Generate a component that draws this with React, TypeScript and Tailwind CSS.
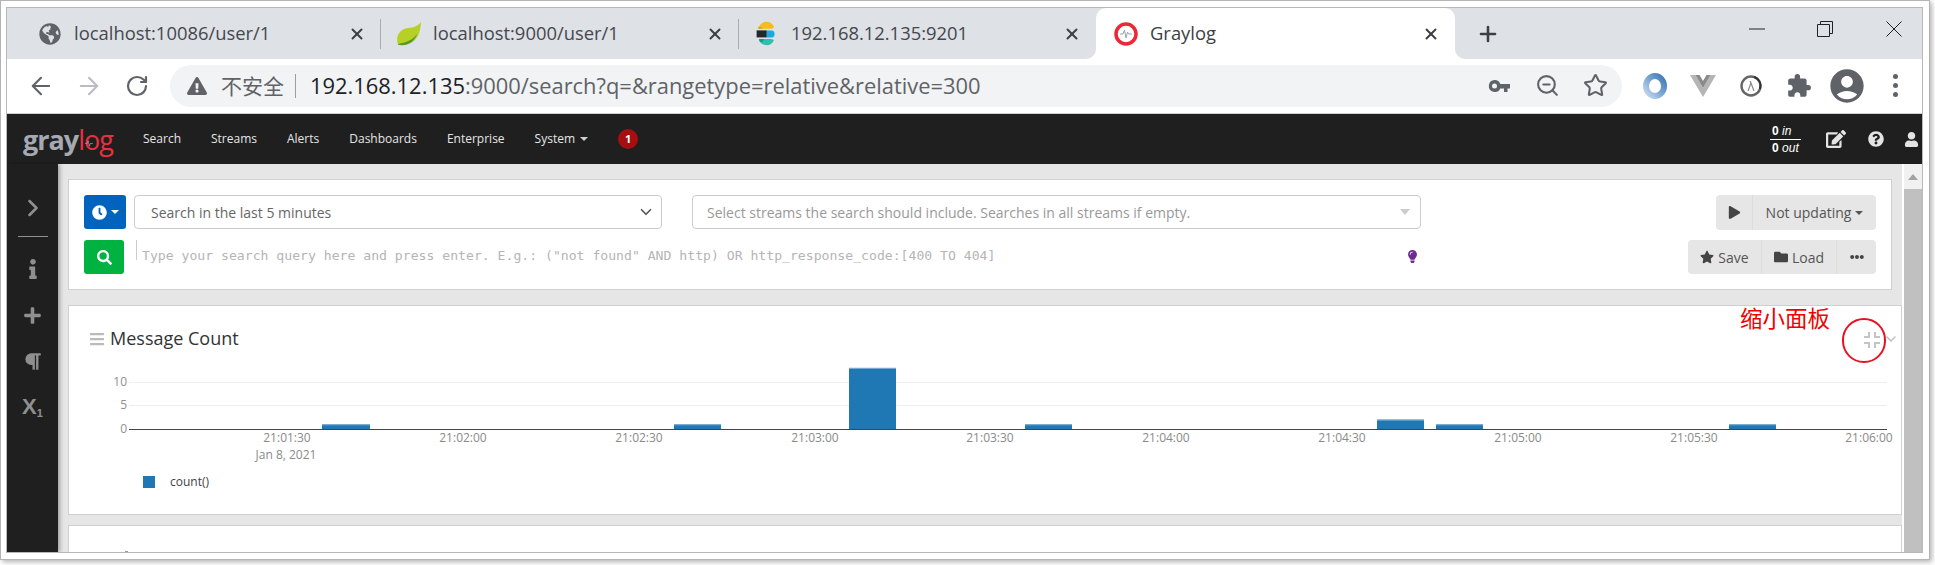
import { ArrowLeft, ArrowRight, RotateCw, ZoomOut, Star, X, Plus, ChevronDown, ChevronRight } from 'lucide-react'
import {
    FaBars, FaClock, FaEdit, FaEllipsisH, FaExclamationTriangle, FaFolder, FaGlobeAmericas, FaInfo, FaLightbulb,
    FaParagraph, FaPlay, FaPlus, FaQuestionCircle, FaSearch, FaStar, FaUser,
} from 'react-icons/fa'
import { MdAccountCircle, MdExtension } from 'react-icons/md'
import type { ReactNode } from 'react'

const NAV_ITEMS = ['Search', 'Streams', 'Alerts', 'Dashboards', 'Enterprise']

const BARS = [
    { x: 322, w: 48, n: 1 },
    { x: 674, w: 47, n: 1 },
    { x: 849, w: 47, n: 13 },
    { x: 1025, w: 47, n: 1 },
    { x: 1377, w: 47, n: 2 },
    { x: 1436, w: 47, n: 1 },
    { x: 1729, w: 47, n: 1 },
]

const TICKS = [
    { x: 287, t: '21:01:30' },
    { x: 463, t: '21:02:00' },
    { x: 639, t: '21:02:30' },
    { x: 815, t: '21:03:00' },
    { x: 990, t: '21:03:30' },
    { x: 1166, t: '21:04:00' },
    { x: 1342, t: '21:04:30' },
    { x: 1518, t: '21:05:00' },
    { x: 1694, t: '21:05:30' },
    { x: 1869, t: '21:06:00' },
]

function LeafIcon() {
    return (
        <svg width="26" height="24" viewBox="0 0 26 24">
            <path d="M25 0C24.500 6 24 16 15 21C10 23.500 5 23.500 2 22.500C-1 14 4 7 12 6C18 5.500 22 4 25 0Z" fill="#b7d025" />
            <path d="M2 22C8 21 16 19 21 12C19 19 11 25 2 22.800Z" fill="#4f9a2a" />
        </svg>
    )
}

function ElasticIcon() {
    return (
        <svg width="22" height="25" viewBox="0 0 24 32">
            <path d="M3 9C4 3 9 1 13 1C17 1 20 3 22 7C22 9 20 10 18 10H3Z" fill="#f4bd19" />
            <path d="M3 7C2 8 2 9 2 10H8C8 9 5 7 3 7Z" fill="#d8a22a" />
            <rect x="0" y="12" width="13" height="9" fill="#23282b" />
            <path d="M13 12H19C22 12 23 14 23 16.500C23 19 22 21 19 21H13Z" fill="#1ba9e1" />
            <path d="M3 23H18C20 23 22 24 22 25C20 29 17 31 13 31C9 31 4 29 3 23Z" fill="#2dbfae" />
            <path d="M3 23H9C9 26 7 27 5 27C4 26 3 25 3 23Z" fill="#159a8c" />
        </svg>
    )
}

function GraylogIcon() {
    return (
        <svg width="24" height="24" viewBox="0 0 24 24">
            <circle cx="12" cy="12" r="10" fill="#fff" stroke="#ee2737" strokeWidth="3.500" />
            <path d="M6 12H9L10.500 8L12 16L13.500 10L14.500 12H18" fill="none" stroke="#9aa3ad" strokeWidth="1" />
        </svg>
    )
}

function RingIcon() {
    return (
        <svg width="26" height="26" viewBox="0 0 26 26">
            <defs>
                <linearGradient id="ring" x1="0" y1="1" x2="1" y2="0">
                    <stop offset="0" stopColor="#c6d9ee" />
                    <stop offset="0.5" stopColor="#7ba7d4" />
                    <stop offset="1" stopColor="#3f77b5" />
                </linearGradient>
            </defs>
            <ellipse cx="13" cy="13" rx="9" ry="10" fill="none" stroke="url(#ring)" strokeWidth="6" />
            <ellipse cx="12" cy="13" rx="4" ry="6" fill="#fff" transform="rotate(15 12 13)" />
        </svg>
    )
}

function VueIcon() {
    return (
        <svg width="26" height="22" viewBox="0 0 26 22">
            <path d="M0 0H5.500L13 13L20.500 0H26L13 22Z" fill="#b5b5b5" />
            <path d="M5.500 0H9.500L13 6L16.500 0H20.500L13 13Z" fill="#8a8a8a" />
        </svg>
    )
}

function LambdaIcon() {
    return (
        <svg width="24" height="24" viewBox="0 0 24 24">
            <circle cx="12" cy="12" r="9.500" fill="#fff" stroke="#666" strokeWidth="2.400" />
            <path d="M15 3C20 4.500 22.500 9 21 15" fill="none" stroke="#333" strokeWidth="2" />
            <path d="M9 17L12 9L15 17M11 7L12 9" fill="none" stroke="#888" strokeWidth="1.200" />
        </svg>
    )
}

function KeyIcon() {
    return (
        <svg width="22" height="14" viewBox="0 0 22 14">
            <path d="M6.500 1A6 6 0 0 1 12.300 5H22V9.500H19.500V13H16V9.500H12.300A6 6 0 1 1 6.500 1ZM6.500 4.500A2.500 2.500 0 1 0 6.500 9.500A2.500 2.500 0 1 0 6.500 4.500Z" fill="#5f6368" fillRule="evenodd" />
        </svg>
    )
}

function CompressIcon() {
    return (
        <svg width="16" height="16" viewBox="0 0 16 16" fill="none" stroke="#c4c4c4" strokeWidth="2">
            <path d="M5 0V5H0M11 0V5H16M5 16V11H0M11 16V11H16" />
        </svg>
    )
}

function Tab(props: { width: string, icon: ReactNode, text: string, padding: string, gap: string, line?: boolean }) {
    return (
        <div className={`${props.width} ${props.padding} relative flex h-full items-center`}>
            <span className={`${props.gap} flex shrink-0 items-center justify-center`}>{props.icon}</span>
            <span className="text-[18.4px] leading-none text-[#45484d]">{props.text}</span>
            <X size={18} strokeWidth={2.6} className="ml-auto mr-[15px] text-[#3c4043]" />
            {props.line && <span className="absolute right-0 top-[11px] h-[30px] w-px bg-[#a9acb0]" />}
        </div>
    )
}

function ToolIcon(props: { children: ReactNode }) {
    return <div className="flex h-full w-[48px] shrink-0 items-center justify-center">{props.children}</div>
}

function ButtonCell(props: { width: string, children: ReactNode, line?: boolean }) {
    return (
        <div className={`${props.width} ${props.line ? 'border-r border-[#dcdcdc]' : ''} flex h-full items-center justify-center gap-[4px] text-[14px] text-[#555]`}>
            {props.children}
        </div>
    )
}

export default function App() {
    return (
        <div className="h-[565px] w-[1935px] overflow-hidden bg-white font-['Open_Sans',sans-serif]">
            <div className="h-[560px] w-[1930px] border border-[#b4b4b4] pl-[5px] pt-[6px] shadow-[2px_2px_5px_rgba(0,0,0,0.3)]">
                <div className="flex h-[546px] w-[1917px] flex-col overflow-hidden border border-[#b8b8b8]">

                    {/* tabs */}
                    <div className="flex h-[51px] shrink-0 items-center bg-[#dee1e6]">
                        <Tab width="w-[374px]" padding="pl-[32px]" gap="mr-[13px] w-[22px]" line icon={<FaGlobeAmericas size={22} className="text-[#5f6368]" />} text="localhost:10086/user/1" />
                        <Tab width="w-[358px]" padding="pl-[15px]" gap="mr-[11px] w-[26px]" line icon={<LeafIcon />} text="localhost:9000/user/1" />
                        <Tab width="w-[357px]" padding="pl-[15px]" gap="mr-[13px] w-[24px]" icon={<ElasticIcon />} text="192.168.12.135:9201" />
                        <div className="relative flex h-full w-[359px] items-center rounded-t-[10px] bg-white pl-[18px]">
                            <span className="absolute bottom-0 left-[-10px] h-[10px] w-[10px] bg-white"><span className="block h-full w-full rounded-br-[10px] bg-[#dee1e6]" /></span>
                            <span className="absolute bottom-0 right-[-10px] h-[10px] w-[10px] bg-white"><span className="block h-full w-full rounded-bl-[10px] bg-[#dee1e6]" /></span>
                            <span className="mr-[12px]"><GraylogIcon /></span>
                            <span className="text-[18.4px] leading-none text-[#3c4043]">Graylog</span>
                            <X size={18} strokeWidth={2.6} className="ml-auto mr-[15px] text-[#3c4043]" />
                        </div>
                        <Plus size={24} strokeWidth={2.6} className="ml-[21px] text-[#3c4043]" />
                        <svg width="16" height="2" viewBox="0 0 16 2" className="mb-[10px] ml-[249px]"><path d="M0 1H16" stroke="#222" /></svg>
                        <svg width="16" height="16" viewBox="0 0 16 16" className="mb-[10px] ml-[52px]" fill="none" stroke="#222">
                            <path d="M0.500 3.500H12.500V15.500H0.500ZM3.500 3.500V0.500H15.500V12.500H12.500" />
                        </svg>
                        <svg width="16" height="16" viewBox="0 0 16 16" className="mb-[10px] ml-[53px]" fill="none" stroke="#222"><path d="M0.500 0.500L15.500 15.500M15.500 0.500L0.500 15.500" /></svg>
                    </div>

                    {/* toolbar */}
                    <div className="flex h-[55px] shrink-0 items-center border-b border-[#cfcfcf] bg-white pb-[1px] pl-[10px]">
                        <ToolIcon><ArrowLeft size={28} strokeWidth={1.8} className="text-[#5f6368]" /></ToolIcon>
                        <ToolIcon><ArrowRight size={28} strokeWidth={1.8} className="text-[#b9bcc0]" /></ToolIcon>
                        <ToolIcon><RotateCw size={24} strokeWidth={2.2} className="text-[#5f6368]" /></ToolIcon>
                        <div className="ml-[9px] flex h-[42px] w-[1452px] items-center rounded-full bg-[#f1f3f4] pl-[17px] pr-[3px]">
                            <FaExclamationTriangle size={20} className="shrink-0 text-[#5f6368]" />
                            <span className="ml-[14px] font-['Noto_Sans_CJK_SC',sans-serif] text-[21px] leading-none text-[#5f6368]">不安全</span>
                            <span className="ml-[11px] h-[24px] w-px bg-[#9a9da1]" />
                            <span className="ml-[14px] text-[21.9px] leading-none text-[#5f6368]"><span className="text-[#202124]">192.168.12.135</span>:9000/search?q=&amp;rangetype=relative&amp;relative=300</span>
                            <div className="ml-auto flex h-full">
                                <ToolIcon><KeyIcon /></ToolIcon>
                                <ToolIcon><ZoomOut size={25} strokeWidth={2} className="text-[#5f6368]" /></ToolIcon>
                                <ToolIcon><Star size={25} strokeWidth={2} className="text-[#5f6368]" /></ToolIcon>
                            </div>
                        </div>
                        <div className="ml-[9px] flex h-full">
                            <ToolIcon><RingIcon /></ToolIcon>
                            <ToolIcon><VueIcon /></ToolIcon>
                            <ToolIcon><LambdaIcon /></ToolIcon>
                            <ToolIcon><MdExtension size={26} className="text-[#5f6368]" /></ToolIcon>
                            <ToolIcon><MdAccountCircle size={40} className="text-[#5f6368]" /></ToolIcon>
                            <ToolIcon>
                                <div className="flex flex-col gap-[4px]">
                                    <span className="h-[5px] w-[5px] rounded-full bg-[#5f6368]" />
                                    <span className="h-[5px] w-[5px] rounded-full bg-[#5f6368]" />
                                    <span className="h-[5px] w-[5px] rounded-full bg-[#5f6368]" />
                                </div>
                            </ToolIcon>
                        </div>
                    </div>

                    {/* graylog navbar */}
                    <div className="flex h-[50px] shrink-0 items-center bg-[#1f1f1f] pl-[16px]">
                        <div className="relative w-[90px] whitespace-nowrap text-[27px] font-bold leading-none tracking-[-1px] text-[#a5a9b2]">
                            gray<span className="font-normal text-[#e8303f]">log</span>
                            <svg width="8" height="7" viewBox="0 0 9 8" className="absolute left-[62px] top-[14px]">
                                <path d="M0 4H2.500L3.500 1L5 7L6 4H9" fill="none" stroke="#9aa3ad" strokeWidth="0.800" />
                            </svg>
                        </div>
                        <div className="ml-[30px] flex items-center gap-[30px] text-[12px] text-[#e6e6e6]">
                            {NAV_ITEMS.map((item) => <span key={item}>{item}</span>)}
                            <span className="flex items-center">
                                System
                                <span className="ml-[5px] border-x-[4px] border-t-[4px] border-x-transparent border-t-[#d0d0d0]" />
                            </span>
                        </div>
                        <span className="ml-[30px] flex h-[20px] w-[20px] items-center justify-center rounded-full bg-[#a50f0f] text-[11px] font-bold text-white">1</span>
                        <div className="ml-auto mr-[25px] w-[31px] font-['Liberation_Sans',sans-serif] text-[12px] leading-[14px] text-white">
                            <div className="border-b border-white pb-[1px] pl-[2px]"><b>0</b> <i>in</i></div>
                            <div className="pl-[2px] pt-[1px]"><b>0</b> <i>out</i></div>
                        </div>
                        <FaEdit size={20} className="mr-[22px] text-[#e4e4e4]" />
                        <FaQuestionCircle size={16} className="mr-[20px] text-[#e4e4e4]" />
                        <FaUser size={15} className="mr-[3px] text-[#e4e4e4]" />
                    </div>

                    <div className="flex min-h-0 flex-1">
                        {/* sidebar */}
                        <div className="relative z-10 flex w-[51px] shrink-0 flex-col items-center bg-[#1f1f1f] pt-[30px] text-[#8f8f8f] shadow-[2px_0_4px_rgba(0,0,0,0.3)]">
                            <ChevronRight size={28} strokeWidth={2.2} />
                            <span className="mt-[14px] h-px w-[30px] bg-[#8f8f8f]" />
                            <FaInfo size={20} className="mt-[22px]" />
                            <FaPlus size={19} className="mt-[27px]" />
                            <FaParagraph size={19} className="mt-[27px]" />
                            <span className="mt-[25px] font-['Liberation_Sans',sans-serif] text-[22px] font-bold leading-none">X<sub className="text-[11px]">1</sub></span>
                        </div>

                        {/* page */}
                        <div className="flex min-w-0 flex-1 bg-white">
                            <div className="mr-[2px] min-w-0 flex-1 overflow-hidden bg-[#e6e6e6] pl-[10px]">

                                <div className="mr-[10px] mt-[15px] h-[111px] border border-[#d0d0d0] bg-white px-[15px] pt-[15px]">
                                    <div className="flex h-[35px] items-start">
                                        <div className="flex h-[34px] w-[42px] items-center justify-center gap-[4px] rounded-[3px] bg-[#0063be] text-white">
                                            <FaClock size={15} />
                                            <span className="border-x-[4px] border-t-[4px] border-x-transparent border-t-white" />
                                        </div>
                                        <div className="ml-[8px] flex h-[34px] w-[528px] items-center rounded-[4px] border border-[#ccc] pl-[16px] pr-[6px] text-[14px] text-[#666]">
                                            Search in the last 5 minutes
                                            <ChevronDown size={18} strokeWidth={2.2} className="ml-auto text-[#555]" />
                                        </div>
                                        <div className="ml-[30px] flex h-[34px] w-[729px] items-center rounded-[4px] border border-[#ccc] pl-[14px] pr-[10px] text-[14px] text-[#999]">
                                            Select streams the search should include. Searches in all streams if empty.
                                            <span className="ml-auto border-x-[5px] border-t-[6px] border-x-transparent border-t-[#ccc]" />
                                        </div>
                                        <div className="ml-auto flex h-[35px] w-[160px] rounded-[4px] bg-[#e6e6e6]">
                                            <ButtonCell width="w-[37px]" line><FaPlay size={13} className="text-[#444]" /></ButtonCell>
                                            <ButtonCell width="flex-1">
                                                Not updating
                                                <span className="border-x-[4px] border-t-[4px] border-x-transparent border-t-[#555]" />
                                            </ButtonCell>
                                        </div>
                                    </div>
                                    <div className="mt-[10px] flex h-[34px] items-start">
                                        <div className="flex h-[34px] w-[40px] items-center justify-center rounded-[3px] bg-[#00b341] text-white"><FaSearch size={15} /></div>
                                        <div className="ml-[12px] flex h-[20px] items-start border-l border-[#ccc] pl-[5px]">
                                            <span className="mt-[7px] whitespace-nowrap font-['DejaVu_Sans_Mono',monospace] text-[13.13px] leading-[18px] text-[#b5b5b5]">Type your search query here and press enter. E.g.: ("not found" AND http) OR http_response_code:[400 TO 404]</span>
                                        </div>
                                        <FaLightbulb size={13} className="ml-[411px] mt-[10px] text-[#6d2c91]" />
                                        <div className="ml-auto flex h-[34px] w-[188px] rounded-[4px] bg-[#e6e6e6]">
                                            <ButtonCell width="w-[74px]" line><FaStar size={14} className="text-[#444]" />Save</ButtonCell>
                                            <ButtonCell width="w-[75px]" line><FaFolder size={14} className="text-[#444]" />Load</ButtonCell>
                                            <ButtonCell width="flex-1"><FaEllipsisH size={14} className="text-[#444]" /></ButtonCell>
                                        </div>
                                    </div>
                                </div>

                                <div className="relative mt-[15px] h-[210px] border border-[#d0d0d0] bg-white">
                                    <div className="flex h-[57px] items-start pl-[20px] pr-[2px] pt-[23px]">
                                        <FaBars size={16} className="mt-[2px] text-[#bbb]" />
                                        <span className="ml-[5px] text-[18px] leading-[18px] text-[#333]">Message Count</span>
                                        <span className="ml-auto mr-[3px] mt-[3px]"><CompressIcon /></span>
                                        <ChevronDown size={16} strokeWidth={2} className="mt-[2px] text-[#bbb]" />
                                    </div>
                                    <svg width="1832" height="100" viewBox="69 363 1832 100" className="block overflow-visible font-['Open_Sans',sans-serif]">
                                        <path d="M129 382.500H1887M129 405.500H1887" stroke="#eee" />
                                        {BARS.map((bar) => (
                                            <g key={bar.x}>
                                                <rect x={bar.x} y={429 - bar.n * 4.7} width={bar.w} height={bar.n * 4.7} fill="#1f77b4" />
                                                <rect x={bar.x} y={429 - bar.n * 4.7} width={bar.w} height={1} fill="#7fb1d6" />
                                            </g>
                                        ))}
                                        <path d="M129 429.500H1887" stroke="#444" />
                                        <g fontSize="12" fill="#909090" textAnchor="end">
                                            <text x="127" y="386">10</text>
                                            <text x="127" y="409">5</text>
                                            <text x="127" y="433">0</text>
                                        </g>
                                        <g fontSize="12" fill="#8a8a8a" textAnchor="middle">
                                            {TICKS.map((tick) => <text key={tick.t} x={tick.x} y="442">{tick.t}</text>)}
                                            <text x="286" y="459">Jan 8, 2021</text>
                                        </g>
                                    </svg>
                                    <div className="ml-[74px] mt-[13px] flex h-[12px] items-center">
                                        <span className="h-[12px] w-[12px] bg-[#1f77b4]" />
                                        <span className="ml-[15px] text-[12px] leading-none text-[#444]">count()</span>
                                    </div>
                                    <span className="absolute left-[1671px] top-[1px] whitespace-nowrap font-['Noto_Sans_CJK_SC',sans-serif] text-[22.5px] leading-[20px] text-[#f00000]">缩小面板</span>
                                    <span className="absolute left-[1773px] top-[12px] h-[45px] w-[44px] rounded-full border-2 border-[#e81123]" />
                                </div>

                                <div className="mt-[10px] h-[60px] border border-[#d0d0d0] bg-white pl-[56px] pt-[25px]">
                                    <div className="h-px w-[3px] bg-[#999]" />
                                </div>
                            </div>

                            {/* scrollbar */}
                            <div className="flex w-[18px] shrink-0 flex-col bg-[#c0c0c0]">
                                <div className="flex h-[25px] items-center justify-center bg-[#f1f1f1]">
                                    <span className="border-x-[5px] border-b-[6px] border-x-transparent border-b-[#a3a3a3]" />
                                </div>
                            </div>
                        </div>
                    </div>
                </div>
            </div>
        </div>
    )
}
